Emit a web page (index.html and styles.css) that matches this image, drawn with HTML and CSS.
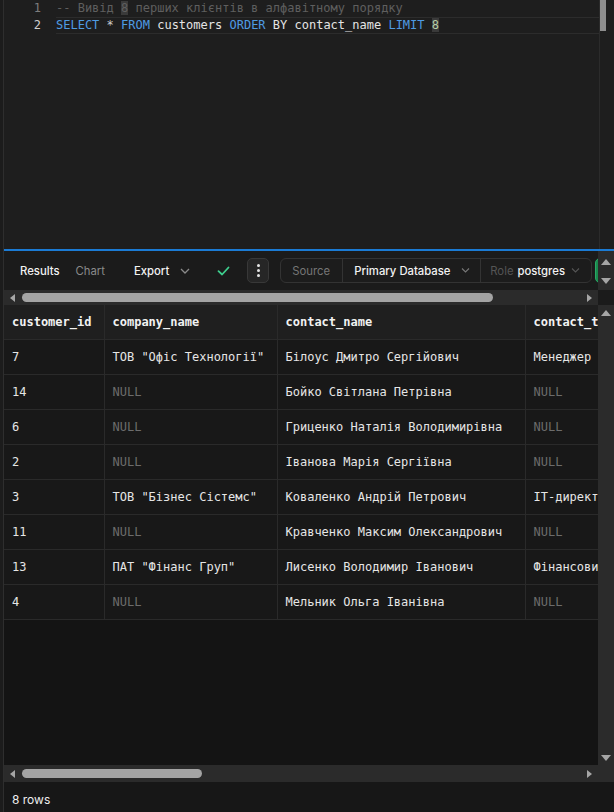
FILE: index.html
```html
<!DOCTYPE html>
<html>
<head>
<meta charset="utf-8">
<link rel="stylesheet" href="styles.css">
</head>
<body>
<div class="app">
  <div class="editor">
    <div class="gutter">
      <div class="ln">1</div>
      <div class="ln active">2</div>
    </div>
    <div class="code">
      <div class="line"><span class="cm">-- Вивід <span class="hl">8</span> перших клієнтів в алфавітному порядку</span></div>
      <div class="line current"><span class="kw">SELECT</span> <span class="op">*</span> <span class="kw">FROM</span> customers <span class="kw">ORDER</span> BY contact_name <span class="kw">LIMIT</span> <span class="num hl">8</span></div>
    </div>
    <div class="ed-scroll"><div class="ed-thumb"></div></div>
  </div>
  <div class="splitter"></div>
  <div class="results-top">
    <div class="tb-view">
      <div class="toolbar">
        <span class="tab">Results</span>
        <span class="tab muted chart">Chart</span>
        <span class="tab export">Export</span>
        <svg class="chev" width="10" height="6" viewBox="0 0 10 6"><path d="M1 1l4 4 4-4" fill="none" stroke="#8a8a8a" stroke-width="1.3"/></svg>
        <svg class="check" width="13" height="10" viewBox="0 0 13 10"><path d="M1.5 5.2l3.6 3.3L11.5 1.5" fill="none" stroke="#3ecf8e" stroke-width="1.8" stroke-linecap="round" stroke-linejoin="round"/></svg>
        <span class="kebab"><i></i><i></i><i></i></span>
        <div class="group">
          <span class="seg source">Source</span>
          <span class="seg db"><b>Primary Database</b><svg class="chev-s" width="9" height="5" viewBox="0 0 9 5"><path d="M1 .5l3.5 3.5L8 .5" fill="none" stroke="#777" stroke-width="1.1"/></svg></span>
          <span class="seg role"><span class="muted2">Role</span><b>postgres</b><svg class="chev-s" width="9" height="5" viewBox="0 0 9 5"><path d="M1 .5l3.5 3.5L8 .5" fill="none" stroke="#555" stroke-width="1.1"/></svg></span>
        </div>
        <span class="run"></span>
      </div>
      <div class="hbar">
        <span class="arr-l"></span>
        <span class="thumb wide"></span>
        <span class="fill"></span>
        <span class="arr-r"></span>
      </div>
    </div>
    <div class="vbar top">
      <span class="arr-u"></span>
      <span class="arr-d"></span>
    </div>
  </div>
  <div class="grid-area">
    <div class="grid-view">
      <table class="grid">
        <colgroup><col class="c1"><col class="c2"><col class="c3"><col class="c4"></colgroup>
        <thead>
          <tr><th>customer_id</th><th>company_name</th><th>contact_name</th><th>contact_title</th></tr>
        </thead>
        <tbody>
          <tr><td>7</td><td>ТОВ "Офіс Технології"</td><td>Білоус Дмитро Сергійович</td><td>Менеджер</td></tr>
          <tr><td>14</td><td class="null">NULL</td><td>Бойко Світлана Петрівна</td><td class="null">NULL</td></tr>
          <tr><td>6</td><td class="null">NULL</td><td>Гриценко Наталія Володимирівна</td><td class="null">NULL</td></tr>
          <tr><td>2</td><td class="null">NULL</td><td>Іванова Марія Сергіївна</td><td class="null">NULL</td></tr>
          <tr><td>3</td><td>ТОВ "Бізнес Сістемс"</td><td>Коваленко Андрій Петрович</td><td>IT-директор</td></tr>
          <tr><td>11</td><td class="null">NULL</td><td>Кравченко Максим Олександрович</td><td class="null">NULL</td></tr>
          <tr><td>13</td><td>ПАТ "Фінанс Груп"</td><td>Лисенко Володимир Іванович</td><td>Фінансовий директор</td></tr>
          <tr><td>4</td><td class="null">NULL</td><td>Мельник Ольга Іванівна</td><td class="null">NULL</td></tr>
        </tbody>
      </table>
    </div>
    <div class="vbar grid-v">
      <span class="arr-u"></span>
      <span class="arr-d"></span>
    </div>
  </div>
  <div class="hbar bottom">
    <span class="arr-l"></span>
    <span class="thumb narrow"></span>
    <span class="fill"></span>
    <span class="arr-r"></span>
  </div>
  <div class="footer">8 rows</div>
</div>
</body>
</html>
```

FILE: styles.css
```css
html, body {
  margin: 0;
  padding: 0;
  background: #1c1c1c;
  width: 614px;
  height: 812px;
  overflow: hidden;
  font-family: Inter, "Noto Sans", sans-serif;
}

.app {
  margin-left: 3px;
  border-left: 1px solid #2e2e2e;
  height: 812px;
  display: flex;
  flex-direction: column;
}

/* Editor */
.editor {
  height: 249px;
  display: flex;
  background: #1e1e1e;
  font-family: "DejaVu Sans Mono", "Liberation Mono", monospace;
  font-size: 12px;
  line-height: 17px;
}
.gutter {
  width: 52px;
  box-sizing: border-box;
  padding-right: 15px;
  text-align: right;
  color: #7d7d7d;
}
.ln { height: 17px; }
.ln.active { color: #d0d0d0; }
.code {
  flex: 1;
  color: #e4e4e4;
}
.line { height: 17px; white-space: pre; }
.line.current {
  box-sizing: border-box;
  border-top: 1px solid #2c2c2c;
  border-bottom: 1px solid #2c2c2c;
  line-height: 15px;
}
.cm { color: #5f5f5f; }
.kw { color: #4f9be3; }
.op { color: #cfcfcf; }
.num { color: #b6cfa5; }
.hl { background: #3a3a3a; }
.ed-scroll {
  width: 14px;
  border-left: 1px solid #2b2b2b;
  background: #1e1e1e;
}
.ed-thumb {
  width: 6px;
  height: 31px;
  background: #8e8e8e;
}

.splitter {
  height: 2px;
  background: #1b7bd4;
}

/* Results toolbar */
.results-top {
  height: 54px;
  display: flex;
  background: #1b1b1b;
}
.tb-view {
  flex: 1;
  min-width: 0;
  display: flex;
  flex-direction: column;
}
.toolbar {
  height: 39px;
  display: flex;
  align-items: center;
  padding-left: 16px;
  white-space: nowrap;
  overflow: hidden;
  font-size: 11.3px;
}
.toolbar > * { flex-shrink: 0; }
.tab {
  color: #f2f2f2;
  font-weight: 500;
}
.tab.muted { color: #8a8a8a; font-weight: 400; }
.chart { margin-left: 16px; }
.export { margin-left: 29px; }
.chev { margin-left: 11px; }
.check { margin-left: 27px; }
.kebab {
  margin-left: 17px;
  width: 22px;
  height: 25px;
  box-sizing: border-box;
  border: 1px solid #383838;
  border-radius: 5px;
  background: #262626;
  display: flex;
  flex-direction: column;
  align-items: center;
  justify-content: center;
  gap: 2px;
}
.kebab i {
  width: 3px;
  height: 3px;
  border-radius: 50%;
  background: #e6e6e6;
}
.group {
  margin-left: 11px;
  height: 25px;
  box-sizing: border-box;
  border: 1px solid #333;
  border-radius: 6px;
  display: flex;
  background: #1c1c1c;
}
.seg {
  display: flex;
  align-items: center;
  box-sizing: border-box;
  border-right: 1px solid #333;
  padding-left: 11px;
}
.seg b { font-weight: 500; color: #f2f2f2; }
.source { width: 62px; color: #767676; }
.db { width: 138px; }
.db .chev-s { margin-left: 10px; }
.role { width: 110px; border-right: none; padding-left: 9px; }
.muted2 { color: #555; margin-right: 4px; }
.role .chev-s { margin-left: 6px; }
.run {
  margin-left: 3px;
  width: 20px;
  height: 25px;
  box-sizing: border-box;
  background: #1b8a4e;
  border: 1px solid #2aa866;
  border-radius: 5px 0 0 5px;
}

/* Scrollbars */
.hbar {
  height: 15px;
  background: #2b2b2b;
  display: flex;
  align-items: center;
  padding: 0 6px 0 6px;
}
.arr-l {
  width: 0; height: 0;
  border-top: 4px solid transparent;
  border-bottom: 4px solid transparent;
  border-right: 5px solid #a6a6a6;
}
.arr-r {
  width: 0; height: 0;
  border-top: 4px solid transparent;
  border-bottom: 4px solid transparent;
  border-left: 5px solid #a6a6a6;
}
.arr-u {
  width: 0; height: 0;
  border-left: 5px solid transparent;
  border-right: 5px solid transparent;
  border-bottom: 6px solid #a6a6a6;
}
.arr-d {
  width: 0; height: 0;
  border-left: 5px solid transparent;
  border-right: 5px solid transparent;
  border-top: 6px solid #a6a6a6;
}
.thumb {
  margin-left: 7px;
  height: 9px;
  border-radius: 5px;
  background: #a4a4a4;
}
.thumb.wide { width: 471px; }
.thumb.narrow { width: 180px; }
.fill { flex: 1; }
.hbar.bottom {
  height: 17px;
  padding-right: 22px;
}

.vbar {
  width: 16px;
  background: #2b2b2b;
  display: flex;
  flex-direction: column;
  align-items: center;
  justify-content: space-between;
  box-sizing: border-box;
}
.vbar.top {
  height: 39px;
  padding: 8px 0 6px;
}
.vbar.grid-v {
  padding: 5px 0 4px;
}

/* Grid */
.grid-area {
  height: 460px;
  display: flex;
}
.grid-view {
  flex: 1;
  min-width: 0;
  overflow: hidden;
  background: #141414;
}
.grid {
  border-collapse: collapse;
  table-layout: fixed;
  width: 741px;
  font-family: "DejaVu Sans Mono", "Liberation Mono", monospace;
  font-size: 12px;
  color: #e6e6e6;
}
.c1 { width: 100px; }
.c2 { width: 173px; }
.c3 { width: 248px; }
.c4 { width: 220px; }
.grid th, .grid td {
  height: 34px;
  padding: 0 8px;
  text-align: left;
  white-space: nowrap;
  overflow: hidden;
  border-right: 1px solid #2a2a2a;
  border-bottom: 1px solid #2a2a2a;
}
.grid th {
  background: #1f1f1f;
  font-weight: bold;
  color: #f2f2f2;
}
.grid td { background: #181818; }
.grid td.null { color: #6c6c6c; }

.footer {
  flex: 1;
  background: #171717;
  color: #eeeeee;
  font-size: 12px;
  line-height: 14px;
  padding: 11px 0 0 8px;
}
```
